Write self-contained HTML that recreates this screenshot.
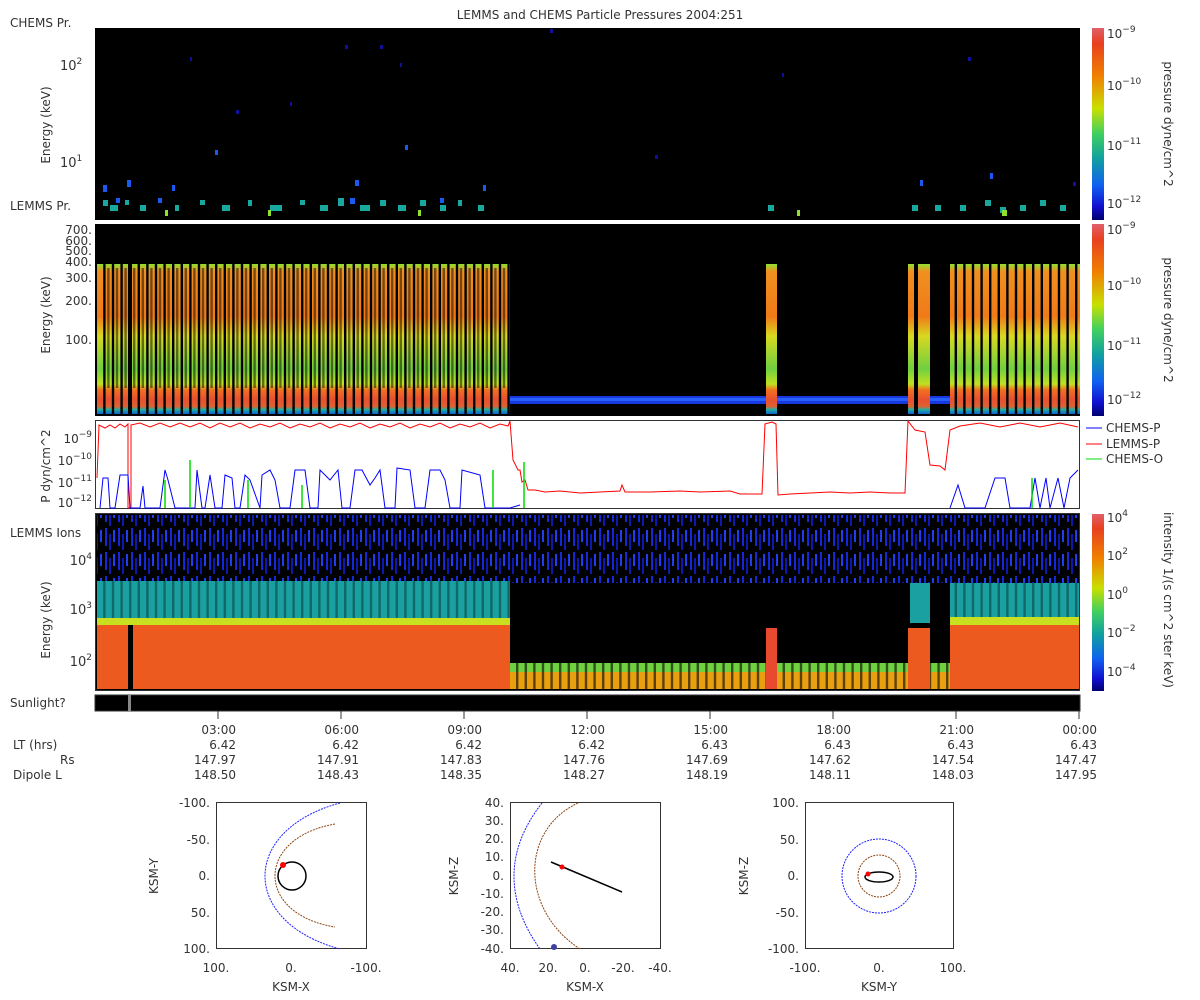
<!DOCTYPE html>
<html><head><meta charset="utf-8"><style>
html,body{margin:0;padding:0;background:#fff;}
svg{display:block;font-family:"DejaVu Sans","Liberation Sans",sans-serif;}
text{fill:#333;}
</style></head><body>
<svg width="1200" height="1000" viewBox="0 0 1200 1000" xmlns="http://www.w3.org/2000/svg">
<defs>
<linearGradient id="cb" x1="0" y1="0" x2="0" y2="1">
<stop offset="0" stop-color="#e0606a"/><stop offset="0.08" stop-color="#e84020"/><stop offset="0.25" stop-color="#f08000"/><stop offset="0.42" stop-color="#c8e000"/><stop offset="0.55" stop-color="#40d060"/><stop offset="0.68" stop-color="#10a0a0"/><stop offset="0.82" stop-color="#1060f0"/><stop offset="0.93" stop-color="#1010d0"/><stop offset="1" stop-color="#000070"/>
</linearGradient>
<pattern id="stripe" width="8.6" height="10" patternUnits="userSpaceOnUse"><rect x="0" y="0" width="2.4" height="10" fill="#000"/></pattern>
<pattern id="noise" width="13" height="24" patternUnits="userSpaceOnUse"><rect width="13" height="24" fill="#000"/><rect x="1" y="0" width="2" height="18" fill="#1428d8"/><rect x="5" y="6" width="2" height="16" fill="#0c18b0"/><rect x="9" y="2" width="2" height="12" fill="#2040f0"/></pattern>
<linearGradient id="p2" x1="0" y1="0" x2="0" y2="1">
<stop offset="0" stop-color="#90e030"/><stop offset="0.05" stop-color="#f09020"/><stop offset="0.35" stop-color="#f07a18"/><stop offset="0.48" stop-color="#d8d820"/><stop offset="0.7" stop-color="#70d040"/><stop offset="0.8" stop-color="#c0e020"/><stop offset="0.84" stop-color="#f07020"/><stop offset="0.9" stop-color="#e85030"/><stop offset="0.95" stop-color="#e06030"/><stop offset="0.97" stop-color="#20b0a0"/><stop offset="1" stop-color="#1060d0"/>
</linearGradient>
</defs>

<text x="600" y="19" font-size="12" text-anchor="middle">LEMMS and CHEMS Particle Pressures  2004:251</text>

<!-- Panel 1 -->
<text x="10" y="27" font-size="12">CHEMS Pr.</text>
<text x="10" y="210" font-size="12">LEMMS Pr.</text>
<rect x="95" y="28" width="985" height="192" fill="#000"/>
<text transform="translate(50,125) rotate(-90)" font-size="12" text-anchor="middle">Energy (keV)</text>
<text x="60" y="70" font-size="13">10<tspan dy="-6" font-size="9">2</tspan></text>
<text x="60" y="167" font-size="13">10<tspan dy="-6" font-size="9">1</tspan></text>
<g fill="#1a5af0">
<rect x="103" y="185" width="4" height="7"/><rect x="127" y="180" width="4" height="7"/><rect x="116" y="198" width="4" height="5"/><rect x="158" y="198" width="4" height="5"/><rect x="172" y="185" width="3" height="6"/><rect x="355" y="180" width="4" height="6"/><rect x="483" y="185" width="3" height="6"/><rect x="215" y="150" width="3" height="5"/><rect x="405" y="145" width="3" height="5"/><rect x="990" y="173" width="3" height="6"/><rect x="920" y="180" width="3" height="6"/></g>
<g fill="#10109a"><rect x="190" y="57" width="2" height="4"/><rect x="345" y="45" width="3" height="4"/><rect x="380" y="45" width="3" height="4"/><rect x="550" y="29" width="3" height="4"/><rect x="236" y="110" width="3" height="4"/><rect x="655" y="155" width="3" height="4"/><rect x="968" y="57" width="3" height="4"/><rect x="290" y="102" width="2" height="4"/><rect x="1073" y="182" width="3" height="4"/><rect x="400" y="63" width="2" height="4"/><rect x="782" y="73" width="2" height="4"/></g>
<g fill="#18a8a0">
<rect x="103" y="200" width="5" height="6"/><rect x="110" y="205" width="8" height="6"/><rect x="125" y="200" width="4" height="5"/><rect x="140" y="205" width="6" height="6"/><rect x="175" y="205" width="4" height="6"/><rect x="200" y="200" width="5" height="5"/><rect x="222" y="205" width="8" height="6"/><rect x="248" y="200" width="4" height="6"/><rect x="270" y="205" width="12" height="6"/><rect x="300" y="200" width="5" height="5"/><rect x="320" y="205" width="8" height="6"/><rect x="338" y="198" width="6" height="8"/><rect x="360" y="205" width="10" height="6"/><rect x="380" y="200" width="6" height="6"/><rect x="398" y="205" width="8" height="6"/><rect x="420" y="200" width="6" height="6"/><rect x="440" y="205" width="6" height="6"/><rect x="458" y="200" width="4" height="6"/><rect x="478" y="205" width="6" height="6"/><rect x="768" y="205" width="6" height="6"/><rect x="912" y="205" width="6" height="6"/><rect x="935" y="205" width="6" height="6"/><rect x="960" y="205" width="6" height="6"/><rect x="985" y="200" width="6" height="6"/><rect x="1000" y="207" width="6" height="6"/><rect x="1020" y="205" width="6" height="6"/><rect x="1040" y="200" width="6" height="6"/><rect x="1060" y="205" width="6" height="6"/></g>
<g fill="#1a5af0"><rect x="116" y="198" width="4" height="5"/><rect x="350" y="198" width="5" height="6"/><rect x="440" y="198" width="4" height="5"/></g>
<g fill="#90e030"><rect x="165" y="210" width="3" height="6"/><rect x="268" y="210" width="3" height="6"/><rect x="418" y="210" width="3" height="6"/><rect x="797" y="210" width="3" height="6"/><rect x="1002" y="210" width="5" height="6"/></g>
<rect x="1092" y="28" width="12" height="192" fill="url(#cb)"/>
<text x="1107" y="38" font-size="12">10<tspan dy="-6" font-size="9">−9</tspan></text>
<text x="1107" y="90" font-size="12">10<tspan dy="-6" font-size="9">−10</tspan></text>
<text x="1107" y="150" font-size="12">10<tspan dy="-6" font-size="9">−11</tspan></text>
<text x="1107" y="208" font-size="12">10<tspan dy="-6" font-size="9">−12</tspan></text>
<text transform="translate(1164,124) rotate(90)" font-size="12" text-anchor="middle">pressure dyne/cm^2</text>

<!-- Panel 2 -->
<rect x="95" y="224" width="985" height="192" fill="#000"/>
<rect x="97" y="264" width="413" height="150" fill="url(#p2)"/>
<rect x="97" y="264" width="413" height="150" fill="url(#stripe)"/>
<rect x="97" y="268" width="413" height="120" fill="url(#stripe)" transform="translate(4,0)" opacity="0.5"/>
<rect x="128" y="264" width="4" height="150" fill="#000"/>
<rect x="510" y="396" width="570" height="8" fill="#1838e0"/>
<rect x="510" y="398" width="570" height="3" fill="#2860ff"/>
<rect x="766" y="264" width="11" height="150" fill="url(#p2)"/>
<rect x="908" y="264" width="22" height="150" fill="url(#p2)"/>
<rect x="914" y="264" width="4" height="150" fill="#000"/>
<rect x="950" y="264" width="130" height="150" fill="url(#p2)"/>
<rect x="950" y="264" width="130" height="150" fill="url(#stripe)"/>
<text transform="translate(50,315) rotate(-90)" font-size="12" text-anchor="middle">Energy (keV)</text>
<g font-size="12" text-anchor="end"><text x="92" y="234">700.</text><text x="92" y="245">600.</text><text x="92" y="255">500.</text><text x="92" y="266">400.</text><text x="92" y="282">300.</text><text x="92" y="305">200.</text><text x="92" y="344">100.</text></g>
<rect x="1092" y="224" width="12" height="192" fill="url(#cb)"/>
<text x="1107" y="234" font-size="12">10<tspan dy="-6" font-size="9">−9</tspan></text>
<text x="1107" y="290" font-size="12">10<tspan dy="-6" font-size="9">−10</tspan></text>
<text x="1107" y="350" font-size="12">10<tspan dy="-6" font-size="9">−11</tspan></text>
<text x="1107" y="404" font-size="12">10<tspan dy="-6" font-size="9">−12</tspan></text>
<text transform="translate(1164,320) rotate(90)" font-size="12" text-anchor="middle">pressure dyne/cm^2</text>

<!-- Panel 3 -->
<rect x="95.5" y="420.5" width="984" height="88" fill="#fff" stroke="#333"/>
<text transform="translate(50,466) rotate(-90)" font-size="12" text-anchor="middle">P dyn/cm^2</text>
<g font-size="12" text-anchor="end"><text x="92" y="443">10<tspan dy="-6" font-size="9">−9</tspan></text><text x="92" y="465">10<tspan dy="-6" font-size="9">−10</tspan></text><text x="92" y="487">10<tspan dy="-6" font-size="9">−11</tspan></text><text x="92" y="507">10<tspan dy="-6" font-size="9">−12</tspan></text></g>
<polyline fill="none" stroke="#f00" stroke-width="1" points="97,478 99,425 105,428 110,425 115,428 120,424 125,427 128,424 128,508 131,508 131,425 140,423 150,427 160,423 170,427 180,423 190,427 200,423 210,428 220,423 230,427 240,423 250,428 260,424 270,427 280,423 290,428 300,424 310,427 320,423 330,428 340,424 350,427 360,423 370,428 380,424 390,427 400,423 410,428 420,424 430,427 440,423 450,428 460,424 470,427 480,423 490,428 500,424 508,426 510,421 513,460 518,470 520,470 522,482 525,480 528,490 535,490 545,492 560,491 580,493 600,492 620,491 622,485 625,492 650,492 680,491 700,492 730,491 740,494 762,494 765,424 772,422 776,424 778,495 790,494 810,493 830,492 850,493 870,492 890,493 905,493 908,421 915,430 925,432 930,465 940,466 945,470 950,430 960,426 980,423 1000,427 1020,423 1040,427 1060,423 1078,427"/>
<polyline fill="none" stroke="#00f" stroke-width="1" points="100,508 103,478 108,478 110,508 115,508 120,475 128,475 130,508 140,508 143,486 145,508 160,508 165,470 168,480 175,508 195,508 197,470 202,508 205,508 210,475 215,508 222,508 225,475 232,478 235,508 240,508 245,475 250,480 260,508 262,475 270,470 275,480 280,508 290,508 295,470 305,470 310,508 318,508 320,470 330,480 338,470 342,508 350,508 355,470 362,470 370,485 375,478 380,470 385,508 395,508 397,468 410,470 415,508 425,508 430,470 440,470 445,480 450,508 460,508 462,470 480,475 485,508 510,508 520,505"/>
<polyline fill="none" stroke="#00f" stroke-width="1" points="950,508 958,485 965,508 985,508 995,478 1005,478 1010,508 1030,508 1035,478 1040,508 1046,478 1050,508 1058,478 1064,508 1070,478 1078,470"/>
<g stroke="#0d0" stroke-width="1.5"><line x1="165" y1="480" x2="165" y2="508"/><line x1="190" y1="460" x2="190" y2="508"/><line x1="248" y1="480" x2="248" y2="508"/><line x1="302" y1="485" x2="302" y2="508"/><line x1="493" y1="470" x2="493" y2="508"/><line x1="524" y1="462" x2="524" y2="508"/><line x1="1032" y1="478" x2="1032" y2="508"/></g>
<g font-size="12"><line x1="1086" y1="428" x2="1102" y2="428" stroke="#00f"/><text x="1106" y="432">CHEMS-P</text><line x1="1086" y1="444" x2="1102" y2="444" stroke="#f00"/><text x="1106" y="448">LEMMS-P</text><line x1="1086" y1="459" x2="1102" y2="459" stroke="#0d0"/><text x="1106" y="463">CHEMS-O</text></g>

<!-- Panel 4 -->
<rect x="95" y="513" width="985" height="178" fill="#000"/>
<rect x="97" y="515" width="983" height="68" fill="url(#noise)"/>
<rect x="97" y="581" width="413" height="40" fill="#1aa0a0"/>
<rect x="97" y="581" width="413" height="40" fill="url(#stripe)" opacity="0.35"/>
<rect x="97" y="618" width="413" height="8" fill="#c8e020"/>
<rect x="97" y="625" width="413" height="64" fill="#ec5a20"/>
<rect x="128" y="625" width="5" height="64" fill="#000"/>
<rect x="510" y="663" width="440" height="10" fill="#70d040"/>
<rect x="510" y="672" width="440" height="17" fill="#e8a010"/>
<rect x="510" y="663" width="440" height="26" fill="url(#stripe)" opacity="0.6"/>
<rect x="766" y="628" width="11" height="61" fill="#e84a30"/>
<rect x="910" y="583" width="20" height="40" fill="#1aa0a0"/>
<rect x="908" y="628" width="22" height="61" fill="#ec5a20"/>
<rect x="950" y="583" width="130" height="36" fill="#1aa0a0"/>
<rect x="950" y="583" width="130" height="36" fill="url(#stripe)" opacity="0.35"/>
<rect x="950" y="617" width="130" height="9" fill="#c8e020"/>
<rect x="950" y="625" width="130" height="64" fill="#ec5a20"/>
<rect x="95.5" y="513.5" width="984" height="177" fill="none" stroke="#333"/>
<text x="10" y="537" font-size="12">LEMMS Ions</text>
<text transform="translate(50,620) rotate(-90)" font-size="12" text-anchor="middle">Energy (keV)</text>
<g font-size="13" text-anchor="end"><text x="92" y="565">10<tspan dy="-6" font-size="9">4</tspan></text><text x="92" y="614">10<tspan dy="-6" font-size="9">3</tspan></text><text x="92" y="666">10<tspan dy="-6" font-size="9">2</tspan></text></g>
<rect x="1092" y="514" width="12" height="177" fill="url(#cb)"/>
<g font-size="12"><text x="1107" y="522">10<tspan dy="-6" font-size="9">4</tspan></text><text x="1107" y="560">10<tspan dy="-6" font-size="9">2</tspan></text><text x="1107" y="599">10<tspan dy="-6" font-size="9">0</tspan></text><text x="1107" y="637">10<tspan dy="-6" font-size="9">−2</tspan></text><text x="1107" y="676">10<tspan dy="-6" font-size="9">−4</tspan></text></g>
<text transform="translate(1164,600) rotate(90)" font-size="12" text-anchor="middle">intensity 1/(s cm^2 ster keV)</text>

<!-- Sunlight -->
<text x="10" y="707" font-size="12">Sunlight?</text>
<rect x="95" y="695" width="985" height="16" fill="#000" stroke="#333"/>
<rect x="128" y="695" width="3" height="16" fill="#888"/>

<!-- Time axis -->
<g stroke="#333"><line x1="218" y1="711" x2="218" y2="719"/><line x1="341" y1="711" x2="341" y2="719"/><line x1="464" y1="711" x2="464" y2="719"/><line x1="587" y1="711" x2="587" y2="719"/><line x1="710" y1="711" x2="710" y2="719"/><line x1="833" y1="711" x2="833" y2="719"/><line x1="956" y1="711" x2="956" y2="719"/><line x1="1079" y1="711" x2="1079" y2="719"/></g>
<g font-size="12" text-anchor="end">
<text x="236" y="734">03:00</text><text x="359" y="734">06:00</text><text x="482" y="734">09:00</text><text x="605" y="734">12:00</text><text x="728" y="734">15:00</text><text x="851" y="734">18:00</text><text x="974" y="734">21:00</text><text x="1097" y="734">00:00</text>
<text x="236" y="749">6.42</text><text x="359" y="749">6.42</text><text x="482" y="749">6.42</text><text x="605" y="749">6.42</text><text x="728" y="749">6.43</text><text x="851" y="749">6.43</text><text x="974" y="749">6.43</text><text x="1097" y="749">6.43</text>
<text x="236" y="764">147.97</text><text x="359" y="764">147.91</text><text x="482" y="764">147.83</text><text x="605" y="764">147.76</text><text x="728" y="764">147.69</text><text x="851" y="764">147.62</text><text x="974" y="764">147.54</text><text x="1097" y="764">147.47</text>
<text x="236" y="779">148.50</text><text x="359" y="779">148.43</text><text x="482" y="779">148.35</text><text x="605" y="779">148.27</text><text x="728" y="779">148.19</text><text x="851" y="779">148.11</text><text x="974" y="779">148.03</text><text x="1097" y="779">147.95</text>
</g>
<g font-size="12"><text x="13" y="749">LT (hrs)</text><text x="60" y="764">Rs</text><text x="13" y="779">Dipole L</text></g>

<!-- Orbit 1 -->
<rect x="216.5" y="802.5" width="150" height="146" fill="#fff" stroke="#333"/>
<g font-size="12" text-anchor="end"><text x="210" y="807">-100.</text><text x="210" y="844">-50.</text><text x="210" y="880">0.</text><text x="210" y="917">50.</text><text x="210" y="953">100.</text></g>
<g font-size="12" text-anchor="middle"><text x="216" y="972">100.</text><text x="291" y="972">0.</text><text x="366" y="972">-100.</text><text x="291" y="991">KSM-X</text></g>
<text transform="translate(158,876) rotate(-90)" font-size="12" text-anchor="middle">KSM-Y</text>
<path d="M340,803 C240,830 240,922 340,949" fill="none" stroke="#2020ff" stroke-dasharray="2,1"/>
<path d="M335,824 C255,838 255,914 335,927" fill="none" stroke="#8b4513" stroke-dasharray="2,1"/>
<ellipse cx="292" cy="876" rx="14" ry="14" fill="none" stroke="#000" stroke-width="1.5"/>
<circle cx="283" cy="865" r="3" fill="#f00"/>

<!-- Orbit 2 -->
<rect x="510.5" y="802.5" width="150" height="146" fill="#fff" stroke="#333"/>
<g font-size="12" text-anchor="end"><text x="504" y="807">40.</text><text x="504" y="825">30.</text><text x="504" y="843">20.</text><text x="504" y="861">10.</text><text x="504" y="880">0.</text><text x="504" y="898">-10.</text><text x="504" y="916">-20.</text><text x="504" y="934">-30.</text><text x="504" y="953">-40.</text></g>
<g font-size="12" text-anchor="middle"><text x="510" y="972">40.</text><text x="548" y="972">20.</text><text x="585" y="972">0.</text><text x="623" y="972">-20.</text><text x="660" y="972">-40.</text><text x="585" y="991">KSM-X</text></g>
<text transform="translate(458,876) rotate(-90)" font-size="12" text-anchor="middle">KSM-Z</text>
<path d="M542,803 C505,850 505,900 540,949" fill="none" stroke="#2020ff" stroke-dasharray="2,1"/>
<path d="M578,803 C520,830 520,910 580,949" fill="none" stroke="#8b4513" stroke-dasharray="2,1"/>
<line x1="551" y1="862" x2="622" y2="892" stroke="#000" stroke-width="1.5"/>
<circle cx="562" cy="867" r="2.5" fill="#f00"/>
<circle cx="554" cy="947" r="3" fill="#4040a0"/>

<!-- Orbit 3 -->
<rect x="805.5" y="802.5" width="148" height="146" fill="#fff" stroke="#333"/>
<g font-size="12" text-anchor="end"><text x="799" y="807">100.</text><text x="799" y="844">50.</text><text x="799" y="880">0.</text><text x="799" y="917">-50.</text><text x="799" y="953">-100.</text></g>
<g font-size="12" text-anchor="middle"><text x="805" y="972">-100.</text><text x="879" y="972">0.</text><text x="953" y="972">100.</text><text x="879" y="991">KSM-Y</text></g>
<text transform="translate(748,876) rotate(-90)" font-size="12" text-anchor="middle">KSM-Z</text>
<circle cx="879" cy="876" r="37" fill="none" stroke="#2020ff" stroke-dasharray="2,1"/>
<circle cx="879" cy="876" r="21" fill="none" stroke="#8b4513" stroke-dasharray="2,1"/>
<ellipse cx="879" cy="877" rx="14" ry="5" fill="none" stroke="#000" stroke-width="1.5"/>
<circle cx="868" cy="874" r="2.5" fill="#f00"/>
</svg>
</body></html>
